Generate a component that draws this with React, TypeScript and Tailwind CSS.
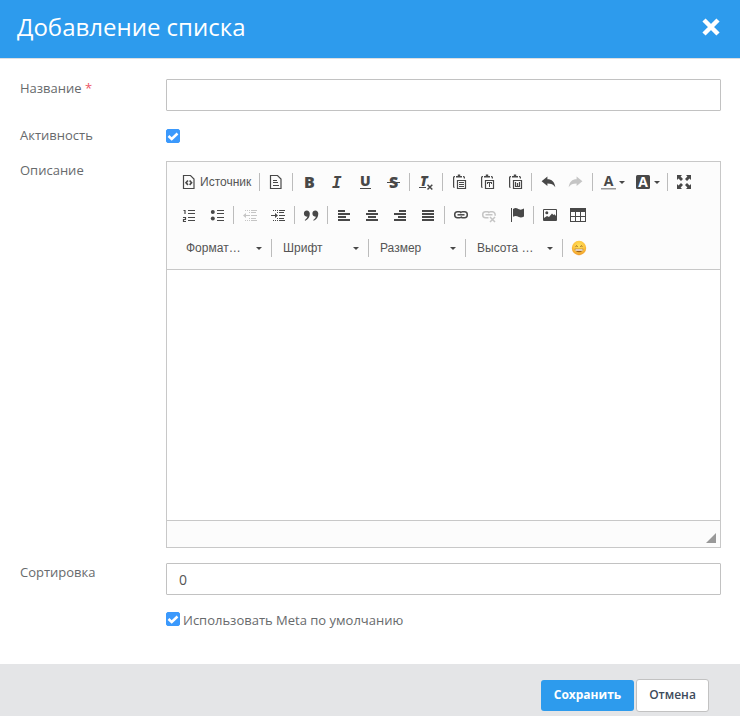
import React, { useState } from "react";

type IconProps = { children: React.ReactNode };

function Icon({ children }: IconProps) {
  return (
    <svg viewBox="0 0 16 16" width="16" height="16" className="block shrink-0 overflow-visible" fill="currentColor" aria-hidden="true">
      {children}
    </svg>
  );
}

const sans = "'Open Sans', 'Noto Sans', sans-serif";

const page = (
  <path d="M2.500 1.500h7l3.500 3.500v9.500H2.500z" fill="none" stroke="currentColor" strokeWidth="1.200" />
);

const clipboard = (
  <>
    <path d="M5 3.500V1.900h1.800V.6h2.400v1.300H11v1.600z" />
    <path d="M4 2.600H3.400Q2.600 2.600 2.600 3.500v8.900q0 1 .9 1M12 2.600h.6q.8 0 .8.900v.9" fill="none" stroke="currentColor" strokeWidth="1.200" />
    <path d="M6.500 6.500h8v8h-8z" fill="none" stroke="currentColor" strokeWidth="1.200" />
  </>
);

const undoArrow = <path d="M1.600 7.300 7.400 2.600v2.700c4.400 0 7.200 2.400 7.900 8-1.800-2.700-4.100-3.700-7.900-3.700v2.500z" />;

const indentLines = (
  <>
    <path d="M9 3h6v1H9zM9 5h5v1H9zM9 8h6v1H9zM9 11h5v1H9zM9 13h6v1H9z" />
    <path d="M3 3h1v1H3zM5 3h1v1H5zM7 3h1v1H7zM3 13h1v1H3zM5 13h1v1H5zM7 13h1v1H7zM7 5h1v1H7zM7 11h1v1H7z" />
  </>
);

const icons = {
  source: (
    <>
      {page}
      <path d="M7 6.500 5 8.700l2 2.200M8.600 6.500l2 2.200-2 2.200" fill="none" stroke="currentColor" strokeWidth="1.600" />
    </>
  ),
  newPage: (
    <>
      {page}
      <path d="M5 6h4v1H5zM5 8h5v1H5zM5 11h6v1H5z" />
    </>
  ),
  bold: <text x="3" y="14" fontFamily={sans} fontWeight="800" fontSize="16">B</text>,
  italic: <text x="3" y="14" fontFamily="'DejaVu Sans Mono', monospace" fontWeight="700" fontStyle="italic" fontSize="16">I</text>,
  underline: (
    <>
      <text x="3" y="12" fontFamily={sans} fontWeight="800" fontSize="14">U</text>
      <path d="M3 14h11v1H3z" />
    </>
  ),
  strike: (
    <>
      <text x="4" y="14" fontFamily={sans} fontWeight="800" fontSize="16">S</text>
      <path d="M2 8h13v1H2z" />
    </>
  ),
  removeFormat: (
    <>
      <text x="2" y="12" fontFamily={sans} fontWeight="800" fontStyle="italic" fontSize="14">T</text>
      <path d="M1 13h7v1H1z" />
      <path d="m9.500 10.700 4.800 4.800m0-4.800-4.800 4.800" fill="none" stroke="currentColor" strokeWidth="1.500" />
    </>
  ),
  paste: (
    <>
      {clipboard}
      <path d="M8 8h5v1H8zM8 10h5v1H8zM8 12h5v1H8z" />
    </>
  ),
  pasteText: (
    <>
      {clipboard}
      <path d="M8 8h5v2h-1V9h-1v4h-1V9H9v1H8z" />
    </>
  ),
  pasteWord: (
    <>
      {clipboard}
      <path d="M8.500 8v4.500h4V8M10.500 9v3.500" fill="none" stroke="currentColor" strokeWidth="1.200" />
    </>
  ),
  undo: undoArrow,
  redo: <g transform="matrix(-1 0 0 1 16 0)">{undoArrow}</g>,
  textColor: (
    <>
      <text x="7.500" y="12" textAnchor="middle" fontFamily={sans} fontWeight="700" fontSize="14">A</text>
      <path d="M0 14h15v1.500H0z" fill="#999" />
    </>
  ),
  bgColor: (
    <>
      <rect x="0" y="1" width="14" height="14" rx="1.500" />
      <text x="7" y="13" textAnchor="middle" fontFamily={sans} fontWeight="700" fontSize="14" fill="#fff">A</text>
    </>
  ),
  maximize: (
    <path d="M1 1h5L4.600 2.500 7 5 5 7 2.500 4.600 1 6zM15 1v5l-1.500-1.400L11 7 9 5l2.400-2.500L10 1zM1 15v-5l1.500 1.400L5 9l2 2-2.400 2.500L6 15zM15 15h-5l1.400-1.500L9 11l2-2 2.500 2.400L15 10z" />
  ),
  numbered: (
    <>
      <path d="M7 3h7v1H7zM7 6h7v1H7zM7 10h7v1H7zM7 13h7v1H7z" />
      <path d="M2.500 3.500H4V7M2 10.500h2.500v2h-2v2H5" fill="none" stroke="currentColor" strokeWidth="1.200" />
    </>
  ),
  bulleted: (
    <>
      <circle cx="3.800" cy="4.900" r="2" />
      <circle cx="3.800" cy="11.600" r="2" />
      <path d="M8 3h7v1H8zM8 6h7v1H8zM8 10h7v1H8zM8 13h7v1H8z" />
    </>
  ),
  outdent: (
    <>
      {indentLines}
      <path d="M1 8.500 4 6v2h4v1H4v2z" />
    </>
  ),
  indent: (
    <>
      {indentLines}
      <path d="M8 8.500 5 6v2H1v1h4v2z" />
    </>
  ),
  quote: (
    <path d="M3.800 3.500c1.800 0 3 1.300 3 3.300 0 3.200-1.700 5.800-4.500 7l-.6-.8c1.600-1 2.500-2.100 2.700-3.400C2.300 9.900.9 8.600.9 6.600c0-1.800 1.200-3.100 2.900-3.100zM12.300 3.500c1.800 0 3 1.300 3 3.300 0 3.200-1.700 5.800-4.500 7l-.6-.8c1.600-1 2.500-2.100 2.700-3.400-2.100.3-3.500-1-3.500-3 0-1.800 1.200-3.100 2.900-3.100z" />
  ),
  left: <path d="M2 3h7v2H2zM2 6h12v2H2zM2 9h8v2H2zM2 12h12v2H2z" />,
  center: <path d="M4 3h8v2H4zM2 6h12v2H2zM4 9h8v2H4zM2 12h12v2H2z" />,
  right: <path d="M7 3h7v2H7zM2 6h12v2H2zM6 9h8v2H6zM2 12h12v2H2z" />,
  justify: <path d="M2 3h12v2H2zM2 6h12v2H2zM2 9h12v2H2zM2 12h12v2H2z" />,
  link: (
    <g fill="none" stroke="currentColor" strokeWidth="1.500">
      <path d="M8.500 5.800Q7.600 4.800 6.500 4.800h-2a2.800 3 0 0 0 0 6h2q1.500 0 2.200-1.300M7.500 9.800q.9 1 2 1h2a2.800 3 0 0 0 0-6h-2q-1.500 0-2.200 1.300" />
      <path d="M4.500 7.800h7" />
    </g>
  ),
  unlink: (
    <g fill="none" stroke="currentColor" strokeWidth="1.500">
      <path d="M8.500 5.800Q7.600 4.800 6.500 4.800h-2a2.800 3 0 0 0 0 6h3M14 8.800a2.800 3 0 0 0-2.500-4h-2q-1.500 0-2.200 1.300M4.500 7.800h7" />
      <path d="m9 10 5 5m0-5-5 5" />
    </g>
  ),
  flag: <path d="M2 1h1v14H2zM4 2c3-2 4.500-.5 6 .3 1.500.6 3 .4 5-.8v8c-2 1.100-3.500 1.300-5.200.5C8 9.200 6.500 8.500 4 9.800z" />,
  image: (
    <>
      <path d="M1.500 2.500h13v11h-13z" fill="none" stroke="currentColor" />
      <circle cx="4.800" cy="5.800" r="1.500" />
      <path d="M2 13v-2l3-2 2 1 3-3.500 1.500 1.500 1-.8L14 9v4z" />
    </>
  ),
  table: (
    <path fillRule="evenodd" d="M0 1h16v14H0zM1 5v4h4V5zM6 5v4h4V5zM11 5v4h4V5zM1 10v4h4v-4zM6 10v4h4v-4zM11 10v4h4v-4z" />
  ),
  smiley: (
    <>
      <defs>
        <radialGradient id="face" cx="0.5" cy="0.350" r="0.650">
          <stop offset="0" stopColor="#ffe25c" />
          <stop offset="0.600" stopColor="#fdc540" />
          <stop offset="1" stopColor="#ee9a2a" />
        </radialGradient>
      </defs>
      <circle cx="8" cy="8" r="7.200" fill="url(#face)" />
      <path d="M4.600 6.500q1-1.200 2 0M9.400 6.500q1-1.200 2 0" fill="none" stroke="#86521a" />
      <path d="M3.600 8.800h8.800c-.2 2.200-2 3.400-4.400 3.400s-4.200-1.200-4.400-3.400z" fill="#9a5f1c" />
      <path d="M4.300 9.300h7.400v1.400H4.300z" fill="#fff" />
    </>
  ),
};

type IconName = keyof typeof icons;

function ToolButton({ icon, label, disabled = false }: { icon: IconName; label: string; disabled?: boolean }) {
  return (
    <button
      type="button"
      title={label}
      aria-label={label}
      disabled={disabled}
      className="flex h-7 w-7 items-center justify-center disabled:opacity-30"
    >
      <Icon>{icons[icon]}</Icon>
    </button>
  );
}

function Caret() {
  return (
    <svg viewBox="0 0 6 3" width="6" height="3" fill="currentColor" className="shrink-0" aria-hidden="true">
      <path d="M0 0h6L3 3z" />
    </svg>
  );
}

function ColorButton({ icon, label }: { icon: IconName; label: string }) {
  return (
    <button type="button" title={label} aria-label={label} className="flex h-7 w-[35px] items-center gap-0.5 pl-1.5">
      <Icon>{icons[icon]}</Icon>
      <Caret />
    </button>
  );
}

function Separator() {
  return <span className="mx-0.5 h-[18px] w-px shrink-0 bg-[#bcbcbc]" />;
}

function Combo({ text, label }: { text: string; label: string }) {
  return (
    <span className="grid h-7 w-[92px] items-center">
      <select aria-label={label} className="col-start-1 row-start-1 h-7 w-full appearance-none bg-transparent pl-[9px] text-xs text-[#555] outline-none">
        <option>{text}</option>
      </select>
      <span className="pointer-events-none col-start-1 row-start-1 justify-self-end pr-[7px]">
        <Caret />
      </span>
    </span>
  );
}

function Checkbox({ id }: { id: string }) {
  const [checked, setChecked] = useState(true);
  return (
    <span className="grid h-3.5 w-3.5 shrink-0">
      <input
        id={id}
        type="checkbox"
        checked={checked}
        onChange={() => setChecked(!checked)}
        className="peer col-start-1 row-start-1 h-3.5 w-3.5 appearance-none rounded-[2px] border border-gray-400 bg-white checked:border-[#3b99fc] checked:bg-[#3b99fc]"
      />
      <svg viewBox="0 0 14 14" className="pointer-events-none invisible col-start-1 row-start-1 h-3.5 w-3.5 peer-checked:visible" aria-hidden="true">
        <path d="m2.500 7 3.200 3 5.800-5.500" fill="none" stroke="#fff" strokeWidth="2.500" />
      </svg>
    </span>
  );
}

function Toolbar() {
  return (
    <div className="flex flex-col gap-[5px] border-b border-[#c8c8c8] bg-[#fcfcfc] px-2 pt-1.5 pb-[7px] font-['Liberation_Sans',Arial,sans-serif] text-[#484848]">
      <div className="flex flex-wrap items-center">
        <button type="button" className="flex h-7 w-[82px] items-center gap-[3px] pl-1.5 text-xs">
          <Icon>{icons.source}</Icon>
          <span className="text-[#555]">Источник</span>
        </button>
        <Separator />
        <ToolButton icon="newPage" label="Новая страница" />
        <Separator />
        <ToolButton icon="bold" label="Полужирный" />
        <ToolButton icon="italic" label="Курсив" />
        <ToolButton icon="underline" label="Подчеркнутый" />
        <ToolButton icon="strike" label="Зачеркнутый" />
        <Separator />
        <ToolButton icon="removeFormat" label="Убрать форматирование" />
        <Separator />
        <ToolButton icon="paste" label="Вставить" />
        <ToolButton icon="pasteText" label="Вставить только текст" />
        <ToolButton icon="pasteWord" label="Вставить из Word" />
        <Separator />
        <ToolButton icon="undo" label="Отменить" />
        <ToolButton icon="redo" label="Повторить" disabled />
        <Separator />
        <ColorButton icon="textColor" label="Цвет текста" />
        <ColorButton icon="bgColor" label="Цвет фона" />
        <Separator />
        <ToolButton icon="maximize" label="Развернуть" />
      </div>
      <div className="flex flex-wrap items-center">
        <ToolButton icon="numbered" label="Нумерованный список" />
        <ToolButton icon="bulleted" label="Маркированный список" />
        <Separator />
        <ToolButton icon="outdent" label="Уменьшить отступ" disabled />
        <ToolButton icon="indent" label="Увеличить отступ" />
        <Separator />
        <ToolButton icon="quote" label="Цитата" />
        <Separator />
        <ToolButton icon="left" label="По левому краю" />
        <ToolButton icon="center" label="По центру" />
        <ToolButton icon="right" label="По правому краю" />
        <ToolButton icon="justify" label="По ширине" />
        <Separator />
        <ToolButton icon="link" label="Вставить ссылку" />
        <ToolButton icon="unlink" label="Убрать ссылку" disabled />
        <ToolButton icon="flag" label="Якорь" />
        <Separator />
        <ToolButton icon="image" label="Изображение" />
        <ToolButton icon="table" label="Таблица" />
      </div>
      <div className="flex flex-wrap items-center pl-0.5">
        <Combo text="Формат…" label="Форматирование" />
        <Separator />
        <Combo text="Шрифт" label="Шрифт" />
        <Separator />
        <Combo text="Размер" label="Размер" />
        <Separator />
        <Combo text="Высота …" label="Высота строки" />
        <Separator />
        <ToolButton icon="smiley" label="Смайлы" />
      </div>
    </div>
  );
}

const inputClass = "h-8 w-full rounded-[1px] border border-[#c2c2c2] bg-white px-3 text-sm text-[#555] outline-none";

export default function App() {
  return (
    <form className="flex min-h-screen flex-col bg-white font-['Open_Sans','Noto_Sans',sans-serif] text-[13px] leading-[18px] text-[#676a6c]" onSubmit={(e) => e.preventDefault()}>
      <header className="flex h-[59px] items-center justify-between border-b border-[#dcdfe2] bg-[#2d9bed] pr-5 pb-1 pl-[17px] text-white">
        <h1 className="text-2xl">Добавление списка</h1>
        <button type="button" aria-label="Закрыть">
          <svg viewBox="0 0 18 18" width="18" height="18" aria-hidden="true">
            <path d="m2 2 14 14M16 2 2 16" stroke="#fff" strokeWidth="4.500" fill="none" />
          </svg>
        </button>
      </header>

      <main className="grid grow grid-cols-[146px_minmax(0,1fr)] content-start gap-y-[15px] pt-5 pr-[19px] pb-8 pl-5">
        <label htmlFor="name">
          Название <span className="text-[#ed5565]">*</span>
        </label>
        <input id="name" className={inputClass} />

        <label htmlFor="active">Активность</label>
        <div className="flex h-5 items-end pb-[3px]">
          <Checkbox id="active" />
        </div>

        <label htmlFor="description">Описание</label>
        <div className="border border-[#c8c8c8]">
          <Toolbar />
          <textarea id="description" className="block h-[250px] w-full resize-none bg-white p-5 outline-none" />
          <div className="flex h-[27px] items-end justify-end border-t border-[#c8c8c8] bg-[#fcfcfc] pr-1 pb-1">
            <svg viewBox="0 0 10 10" width="10" height="10" aria-hidden="true">
              <path d="M10 0v10H0z" fill="#999" />
            </svg>
          </div>
        </div>

        <label htmlFor="sort">Сортировка</label>
        <input id="sort" defaultValue="0" className={inputClass} />

        <div className="col-start-2 flex items-start gap-[3px]">
          <span className="pt-0.5">
            <Checkbox id="meta" />
          </span>
          <label htmlFor="meta" className="leading-5">Использовать Meta по умолчанию</label>
        </div>
      </main>

      <footer className="flex items-center justify-end gap-0.5 bg-[#e4e5e7] pt-[15px] pr-[31px] pb-1 text-xs font-semibold">
        <button type="submit" className="h-[31px] w-[93px] rounded-[3px] bg-[#2d9bed] pb-0.5 font-bold text-white">Сохранить</button>
        <button type="button" className="h-[33px] w-[73px] rounded-[3px] border border-[#c2c2c2] bg-white pb-0.5 text-[#3e4b5b]">Отмена</button>
      </footer>
    </form>
  );
}
